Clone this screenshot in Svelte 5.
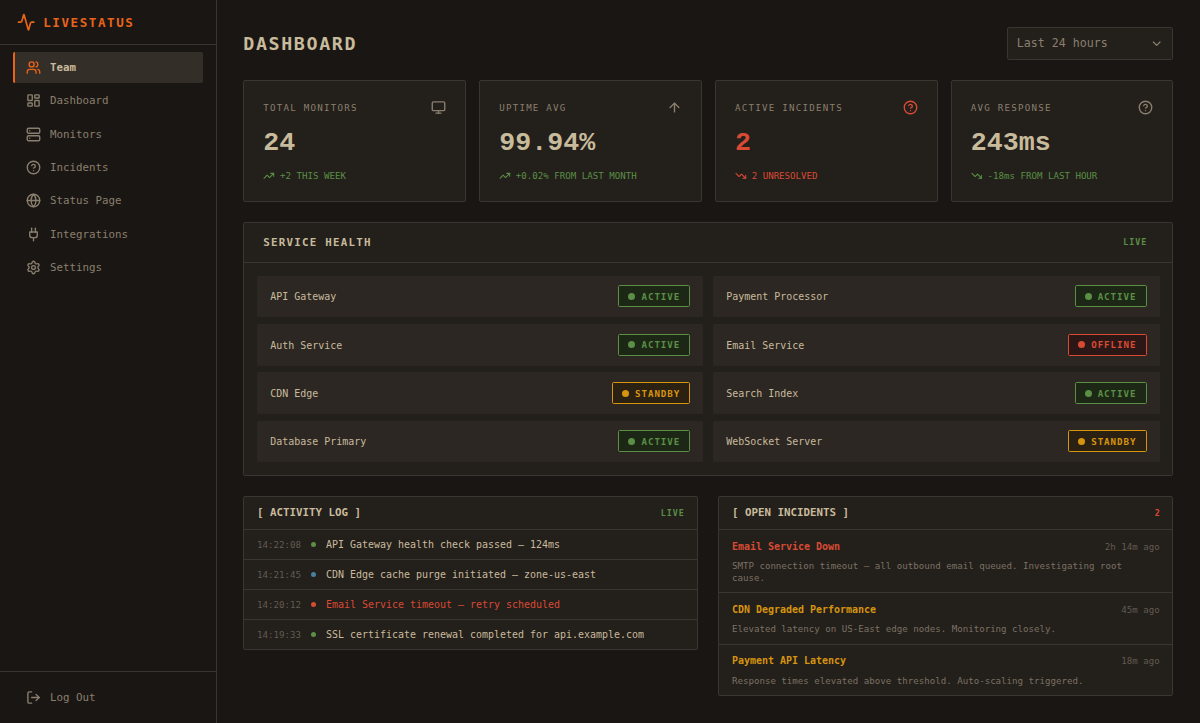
<script lang="ts">
  type Tone = 'ok' | 'bad' | 'warn' | 'info';

  const icons: Record<string, string[]> = {
    activity: [
      'M22 12h-2.48a2 2 0 0 0-1.93 1.46l-2.35 8.36a.25.25 0 0 1-.48 0L9.24 2.18a.25.25 0 0 0-.48 0l-2.35 8.36A2 2 0 0 1 4.49 12H2',
    ],
    users: [
      'M16 21v-2a4 4 0 0 0-4-4H6a4 4 0 0 0-4 4v2',
      'M5 7a4 4 0 1 0 8 0a4 4 0 1 0-8 0',
      'M22 21v-2a4 4 0 0 0-3-3.87',
      'M16 3.13a4 4 0 0 1 0 7.75',
    ],
    dashboard: [
      'M4 3h5a1 1 0 0 1 1 1v7a1 1 0 0 1-1 1H4a1 1 0 0 1-1-1V4a1 1 0 0 1 1-1z',
      'M15 3h5a1 1 0 0 1 1 1v3a1 1 0 0 1-1 1h-5a1 1 0 0 1-1-1V4a1 1 0 0 1 1-1z',
      'M15 12h5a1 1 0 0 1 1 1v7a1 1 0 0 1-1 1h-5a1 1 0 0 1-1-1v-7a1 1 0 0 1 1-1z',
      'M4 16h5a1 1 0 0 1 1 1v3a1 1 0 0 1-1 1H4a1 1 0 0 1-1-1v-3a1 1 0 0 1 1-1z',
    ],
    server: [
      'M4 2h16a2 2 0 0 1 2 2v4a2 2 0 0 1-2 2H4a2 2 0 0 1-2-2V4a2 2 0 0 1 2-2z',
      'M4 14h16a2 2 0 0 1 2 2v4a2 2 0 0 1-2 2H4a2 2 0 0 1-2-2v-4a2 2 0 0 1 2-2z',
      'M6 6h.01',
      'M6 18h.01',
    ],
    help: [
      'M2 12a10 10 0 1 0 20 0a10 10 0 1 0-20 0',
      'M9.09 9a3 3 0 0 1 5.83 1c0 2-3 3-3 3',
      'M12 17h.01',
    ],
    globe: [
      'M2 12a10 10 0 1 0 20 0a10 10 0 1 0-20 0',
      'M12 2a14.5 14.5 0 0 0 0 20 14.5 14.5 0 0 0 0-20',
      'M2 12h20',
    ],
    plug: ['M12 22v-5', 'M9 8V2', 'M15 8V2', 'M18 8v5a4 4 0 0 1-4 4h-4a4 4 0 0 1-4-4V8z'],
    settings: [
      'M9.671 4.136a2.34 2.34 0 0 1 4.659 0 2.34 2.34 0 0 0 3.319 1.915 2.34 2.34 0 0 1 2.33 4.033 2.34 2.34 0 0 0 0 3.831 2.34 2.34 0 0 1-2.33 4.033 2.34 2.34 0 0 0-3.319 1.915 2.34 2.34 0 0 1-4.659 0 2.34 2.34 0 0 0-3.32-1.915 2.34 2.34 0 0 1-2.33-4.033 2.34 2.34 0 0 0 0-3.831A2.34 2.34 0 0 1 6.35 6.051a2.34 2.34 0 0 0 3.319-1.915',
      'M9 12a3 3 0 1 0 6 0a3 3 0 1 0-6 0',
    ],
    logout: ['M9 21H5a2 2 0 0 1-2-2V5a2 2 0 0 1 2-2h4', 'M16 17l5-5-5-5', 'M21 12H9'],
    monitor: [
      'M4 3h16a2 2 0 0 1 2 2v10a2 2 0 0 1-2 2H4a2 2 0 0 1-2-2V5a2 2 0 0 1 2-2z',
      'M8 21h8',
      'M12 17v4',
    ],
    arrowUp: ['M5 12l7-7 7 7', 'M12 19V5'],
    trendUp: ['M22 7l-8.5 8.5-5-5L2 17', 'M16 7h6v6'],
    trendDown: ['M22 17l-8.5-8.5-5 5L2 7', 'M16 17h6v-6'],
    chevron: ['M6 9l6 6 6-6'],
  };

  const nav = [
    { label: 'Team', icon: 'users' },
    { label: 'Dashboard', icon: 'dashboard' },
    { label: 'Monitors', icon: 'server' },
    { label: 'Incidents', icon: 'help' },
    { label: 'Status Page', icon: 'globe' },
    { label: 'Integrations', icon: 'plug' },
    { label: 'Settings', icon: 'settings' },
  ];
  let current = $state('Team');

  const stats = [
    { label: 'TOTAL MONITORS', value: '24', icon: 'monitor', trend: 'trendUp', note: '+2 THIS WEEK', alert: false },
    { label: 'UPTIME AVG', value: '99.94%', icon: 'arrowUp', trend: 'trendUp', note: '+0.02% FROM LAST MONTH', alert: false },
    { label: 'ACTIVE INCIDENTS', value: '2', icon: 'help', trend: 'trendDown', note: '2 UNRESOLVED', alert: true },
    { label: 'AVG RESPONSE', value: '243ms', icon: 'help', trend: 'trendDown', note: '-18ms FROM LAST HOUR', alert: false },
  ];

  const statusLabel: Record<string, string> = { ok: 'ACTIVE', bad: 'OFFLINE', warn: 'STANDBY' };
  const services: { name: string; status: Tone }[] = [
    { name: 'API Gateway', status: 'ok' },
    { name: 'Payment Processor', status: 'ok' },
    { name: 'Auth Service', status: 'ok' },
    { name: 'Email Service', status: 'bad' },
    { name: 'CDN Edge', status: 'warn' },
    { name: 'Search Index', status: 'ok' },
    { name: 'Database Primary', status: 'ok' },
    { name: 'WebSocket Server', status: 'warn' },
  ];

  const log: { time: string; tone: Tone; text: string }[] = [
    { time: '14:22:08', tone: 'ok', text: 'API Gateway health check passed — 124ms' },
    { time: '14:21:45', tone: 'info', text: 'CDN Edge cache purge initiated — zone-us-east' },
    { time: '14:20:12', tone: 'bad', text: 'Email Service timeout — retry scheduled' },
    { time: '14:19:33', tone: 'ok', text: 'SSL certificate renewal completed for api.example.com' },
  ];

  const incidents: { title: string; tone: Tone; ago: string; text: string }[] = [
    {
      title: 'Email Service Down',
      tone: 'bad',
      ago: '2h 14m ago',
      text: 'SMTP connection timeout — all outbound email queued. Investigating root cause.',
    },
    {
      title: 'CDN Degraded Performance',
      tone: 'warn',
      ago: '45m ago',
      text: 'Elevated latency on US-East edge nodes. Monitoring closely.',
    },
    {
      title: 'Payment API Latency',
      tone: 'warn',
      ago: '18m ago',
      text: 'Response times elevated above threshold. Auto-scaling triggered.',
    },
  ];
</script>

{#snippet icon(name: string, size = 15)}
  <svg class="icon" width={size} height={size} viewBox="0 0 24 24">
    {#each icons[name] as d}
      <path {d} />
    {/each}
  </svg>
{/snippet}

<div class="app">
  <aside class="sidebar">
    <div class="brand">
      {@render icon('activity', 18.33)}
      <span>LIVESTATUS</span>
    </div>
    <nav>
      {#each nav as item (item.label)}
        <button class="nav-item" class:active={item.label === current} onclick={() => (current = item.label)}>
          {@render icon(item.icon)}
          <span>{item.label}</span>
        </button>
      {/each}
    </nav>
    <div class="side-footer">
      <button class="nav-item">
        {@render icon('logout')}
        <span>Log Out</span>
      </button>
    </div>
  </aside>

  <main>
    <header class="topbar">
      <h1>DASHBOARD</h1>
      <button class="range">
        <span>Last 24 hours</span>
        {@render icon('chevron', 13.33)}
      </button>
    </header>

    <section class="stats">
      {#each stats as s (s.label)}
        <div class="stat" class:alert={s.alert}>
          <div class="stat-head">
            <span class="stat-label">{s.label}</span>
            {@render icon(s.icon)}
          </div>
          <div class="stat-value">{s.value}</div>
          <div class="stat-note">
            {@render icon(s.trend, 11.67)}
            <span>{s.note}</span>
          </div>
        </div>
      {/each}
    </section>

    <section class="panel health">
      <div class="health-head">
        <h2>SERVICE HEALTH</h2>
        <span class="live">LIVE</span>
      </div>
      <div class="services">
        {#each services as s (s.name)}
          <div class="service">
            <span class="service-name">{s.name}</span>
            <span class="badge {s.status}"><i></i>{statusLabel[s.status]}</span>
          </div>
        {/each}
      </div>
    </section>

    <section class="bottom">
      <div class="panel">
        <div class="panel-head">
          <h3>[ ACTIVITY LOG ]</h3>
          <span class="live">LIVE</span>
        </div>
        {#each log as row (row.time)}
          <div class="log-row {row.tone}">
            <time>{row.time}</time>
            <i></i>
            <span>{row.text}</span>
          </div>
        {/each}
      </div>

      <div class="panel">
        <div class="panel-head">
          <h3>[ OPEN INCIDENTS ]</h3>
          <span class="live count">2</span>
        </div>
        {#each incidents as inc (inc.title)}
          <div class="incident {inc.tone}">
            <div class="incident-head">
              <strong>{inc.title}</strong>
              <span>{inc.ago}</span>
            </div>
            <p>{inc.text}</p>
          </div>
        {/each}
      </div>
    </section>
  </main>
</div>

<style>
  :global(body) { background: #1a1613; }
  .app {
    --card: #231f1b;
    --row: #2c2723;
    --line: #393530;
    --text: #c8bb9c;
    --muted: #8a7f6e;
    --dim: #625b51;
    --green: #5a8f45;
    --red: #d94a34;
    --amber: #d6940f;
    display: flex;
    height: 723px;
    overflow: hidden;
    background: #1a1613;
    color: var(--text);
    font-family: 'DejaVu Sans Mono', 'Liberation Mono', monospace;
    font-size: 9.97px;
    line-height: 1.2;
  }
  .app :global(*) { box-sizing: border-box; }
  h1, h2, h3, p { margin: 0; }
  button { font: inherit; color: inherit; background: none; border: 0; cursor: pointer; }
  .icon {
    flex: none;
    display: block;
    fill: none;
    stroke: currentColor;
    stroke-width: 2.2;
    stroke-linecap: round;
    stroke-linejoin: round;
  }

  .sidebar {
    width: 217px;
    flex: none;
    display: flex;
    flex-direction: column;
    border-right: 1px solid var(--line);
  }
  .brand {
    display: flex;
    align-items: center;
    gap: 8.3px;
    height: 45px;
    padding: 0 16.6px;
    border-bottom: 1px solid var(--line);
    color: #e8641b;
    font-size: 12.5px;
    font-weight: 700;
    letter-spacing: 1.6px;
  }
  nav { flex: 1; display: flex; flex-direction: column; gap: 1.67px; padding: 6.7px 12.7px 6.7px 13.3px; }
  .nav-item {
    display: flex;
    align-items: center;
    gap: 8.8px;
    width: 100%;
    height: 31.67px;
    padding: 0 10.9px;
    border-left: 2px solid transparent;
    border-radius: 1.67px;
    color: var(--muted);
    font-size: 10.8px;
    text-align: left;
  }
  .nav-item.active {
    background: #332e28;
    border-left-color: #e8641b;
    color: var(--text);
    font-weight: 700;
  }
  .nav-item.active .icon { color: #e8641b; }
  .nav-item span, .range span, .service-name { padding-top: 2px; }
  .side-footer { padding: 9.9px 13.3px; border-top: 1px solid var(--line); }

  main { flex: 1; min-width: 0; padding: 26.67px 26.67px 0 26.33px; }
  .topbar { display: flex; justify-content: space-between; align-items: center; height: 33.3px; }
  h1 { padding-top: 1px; font-size: 18.33px; font-weight: 700; letter-spacing: 1.6px; }
  .range {
    display: flex;
    justify-content: space-between;
    align-items: center;
    width: 166.7px;
    height: 33.3px;
    padding: 0 9.2px;
    border: 1px solid var(--line);
    border-radius: 1.67px;
    background: var(--card);
    color: var(--muted);
    font-size: 11.63px;
  }

  .stats { display: grid; grid-template-columns: repeat(4, 1fr); gap: 13.33px; margin-top: 20px; }
  .stat {
    height: 121.7px;
    padding: 19px;
    border: 1px solid var(--line);
    border-radius: 2px;
    background: var(--card);
  }
  .stat-head { display: flex; justify-content: space-between; align-items: center; color: var(--muted); }
  .stat-label { font-size: 9.17px; letter-spacing: 1.23px; }
  .stat-value {
    margin-top: 11px;
    font-family: 'Liberation Mono', 'Courier New', monospace;
    font-size: 26.67px;
    font-weight: 700;
    line-height: 34px;
  }
  .stat-note {
    display: flex;
    align-items: center;
    gap: 5px;
    margin-top: 10px;
    color: var(--green);
    font-size: 9.14px;
  }
  .stat-note span { padding-top: 1.5px; }
  .alert .icon, .alert .stat-value, .alert .stat-note { color: var(--red); }

  .panel { border: 1px solid var(--line); border-radius: 2px; background: var(--card); }
  .health { margin-top: 20px; height: 254px; }
  .health-head {
    display: flex;
    justify-content: space-between;
    align-items: center;
    height: 40px;
    padding: 0 25px 0 19px;
    border-bottom: 1px solid var(--line);
  }
  h2 { font-size: 10.83px; font-weight: 700; letter-spacing: 1.22px; }
  .live { color: var(--green); font-size: 8.33px; font-weight: 700; letter-spacing: 1px; }
  .count { color: var(--red); letter-spacing: 0; }
  .services { display: grid; grid-template-columns: 1fr 1fr; gap: 6.67px 10px; padding: 13px 12.8px; }
  .service {
    display: flex;
    justify-content: space-between;
    align-items: center;
    height: 41.67px;
    padding: 0 13px;
    border-radius: 1.67px;
    background: var(--row);
  }
  .badge {
    display: flex;
    align-items: center;
    height: 22px;
    padding: 0 9px;
    border: 1px solid;
    border-radius: 1.67px;
    font-size: 9.17px;
    font-weight: 700;
    letter-spacing: 0.97px;
  }
  .badge i { width: 7px; height: 7px; margin-right: 6px; border-radius: 50%; background: currentColor; }
  .badge.ok { color: var(--green); background: #1c2716; }
  .badge.bad { color: var(--red); background: #2b1715; }
  .badge.warn { color: var(--amber); background: #2b2112; }

  .bottom { display: grid; grid-template-columns: 1fr 1fr; gap: 20px; align-items: start; margin-top: 20px; }
  .panel-head {
    display: flex;
    justify-content: space-between;
    align-items: center;
    height: 32.7px;
    padding: 0 12.6px;
  }
  h3 { font-size: 10.8px; font-weight: 700; }
  .log-row {
    display: flex;
    align-items: center;
    height: 30px;
    padding: 0 12.6px;
    border-top: 1px solid var(--line);
  }
  .log-row time { padding-top: 1.5px; color: var(--dim); font-size: 9.14px; }
  .log-row i { width: 5px; height: 5px; margin: 0 10px; border-radius: 50%; background: var(--green); }
  .log-row.info i { background: #47809f; }
  .log-row.bad i { background: var(--red); }
  .log-row.bad span { color: var(--red); }

  .incident { padding: 10px 12.6px 8.1px; border-top: 1px solid var(--line); }
  .incident-head { display: flex; justify-content: space-between; align-items: center; height: 13px; }
  .incident-head span { padding-top: 1px; color: var(--dim); font-size: 9.14px; }
  .incident strong { color: var(--amber); }
  .incident.bad strong { color: var(--red); }
  .incident p { margin-top: 7px; color: #7b7163; font-size: 9.14px; line-height: 12px; }
</style>
